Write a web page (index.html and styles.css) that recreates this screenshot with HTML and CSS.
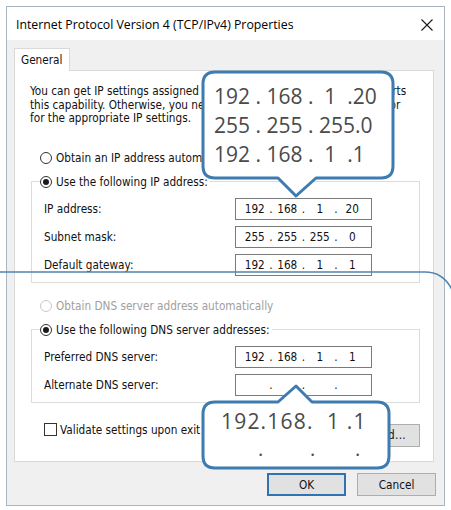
FILE: index.html
```html
<!DOCTYPE html>
<html>
<head>
<meta charset="utf-8">
<link rel="stylesheet" href="styles.css">
</head>
<body>
<div class="window">
  <div class="titlebar">
    <span class="title">Internet Protocol Version 4 (TCP/IPv4) Properties</span>
    <svg class="close" width="12" height="12" viewBox="0 0 12 12"><path d="M0.5 0.5 L11.5 11.5 M11.5 0.5 L0.5 11.5" stroke="#1a1a1a" stroke-width="1.1" fill="none"/></svg>
  </div>
  <div class="body">
    <div class="tabs"><div class="tab">General</div></div>
    <div class="panel">
      <p class="intro">You can get IP settings assigned automatically if your network supports<br>this capability. Otherwise, you need to ask your network administrator<br>for the appropriate IP settings.</p>
      <div class="radio-row first"><span class="radio"></span><span>Obtain an IP address automatically</span></div>
      <fieldset class="group">
        <legend class="radio-row"><span class="radio on"></span><span>Use the following IP address:</span></legend>
        <div class="field"><span class="label">IP address:</span><div class="ip"><span>192</span><i>.</i><span>168</span><i>.</i><span>1</span><i>.</i><span>20</span></div></div>
        <div class="field"><span class="label">Subnet mask:</span><div class="ip"><span>255</span><i>.</i><span>255</span><i>.</i><span>255</span><i>.</i><span>0</span></div></div>
        <div class="field"><span class="label">Default gateway:</span><div class="ip"><span>192</span><i>.</i><span>168</span><i>.</i><span>1</span><i>.</i><span>1</span></div></div>
      </fieldset>
      <div class="radio-row dns disabled"><span class="radio"></span><span>Obtain DNS server address automatically</span></div>
      <fieldset class="group">
        <legend class="radio-row"><span class="radio on"></span><span>Use the following DNS server addresses:</span></legend>
        <div class="field"><span class="label">Preferred DNS server:</span><div class="ip"><span>192</span><i>.</i><span>168</span><i>.</i><span>1</span><i>.</i><span>1</span></div></div>
        <div class="field"><span class="label">Alternate DNS server:</span><div class="ip"><span></span><i>.</i><span></span><i>.</i><span></span><i>.</i><span></span></div></div>
      </fieldset>
      <div class="check-row">
        <span class="checkbox"></span><span class="check-label">Validate settings upon exit</span>
        <button class="btn advanced">Advanced...</button>
      </div>
    </div>
    <div class="buttons">
      <button class="btn ok">OK</button>
      <button class="btn">Cancel</button>
    </div>
  </div>
</div>

<svg class="overlay" width="451" height="510" viewBox="0 0 451 510">
  <path d="M0 272 L425 272 C438 272 447 278 453 292" stroke="#4f84b2" stroke-width="1.6" fill="none"/>
  <path d="M215 72 L381 72 Q393 72 393 84 L393 166 Q393 178 381 178 L316 178 L296 196 L278 178 L215 178 Q203 178 203 166 L203 84 Q203 72 215 72 Z" fill="#fff" stroke="#3d7bb0" stroke-width="3" stroke-linejoin="round"/>
  <path d="M215 402 L278 402 L296 386 L312 402 L377 402 Q389 402 389 414 L389 456 Q389 468 377 468 L215 468 Q203 468 203 456 L203 414 Q203 402 215 402 Z" fill="#fff" stroke="#3d7bb0" stroke-width="3" stroke-linejoin="round"/>
</svg>

<div class="callout c1">
  <div class="big">192 . 168 .  1  .20</div>
  <div class="big">255 . 255 . 255.0</div>
  <div class="big">192 . 168 .  1  .1</div>
</div>
<div class="callout c2">
  <div class="mid">192.168.  1 .1</div>
  <div class="dots"><span>.</span><span>.</span><span>.</span></div>
</div>
</body>
</html>
```
FILE: styles.css
```css
html, body {
  margin: 0;
  padding: 0;
  background: #fff;
}
body {
  width: 451px;
  height: 510px;
  position: relative;
  overflow: hidden;
  font-family: "DejaVu Sans Condensed", "DejaVu Sans", sans-serif;
  font-size: 11.7px;
  color: #111;
}
.window {
  margin: 6px 0 0 6px;
  width: 439px;
  height: 500px;
  box-sizing: border-box;
  border: 1px solid #a9b5c3;
  background: #f0f0f0;
  display: flex;
  flex-direction: column;
}
.titlebar {
  height: 33px;
  background: #fff;
  display: flex;
  align-items: center;
  justify-content: space-between;
  padding: 0 11px 0 9px;
  flex: none;
}
.title {
  font-family: "Open Sans", "Noto Sans", sans-serif;
  font-size: 12.3px;
  color: #000;
  padding-top: 2px;
}
.close {
  margin-top: 2px;
}
.body {
  padding: 8px 0 0 7px;
  display: flex;
  flex-direction: column;
}
.tabs {
  display: flex;
  height: 22px;
}
.tab {
  width: 56px;
  height: 23px;
  box-sizing: border-box;
  border: 1px solid #d9d9d9;
  border-bottom: none;
  background: #fff;
  padding: 4px 0 0 6px;
  position: relative;
  z-index: 1;
}
.panel {
  width: 420px;
  height: 392px;
  box-sizing: border-box;
  border: 1px solid #d9d9d9;
  background: #fff;
  padding: 14px 13px 0 15px;
}
.intro {
  margin: 0;
  line-height: 13.5px;
  white-space: nowrap;
}
.radio-row {
  display: flex;
  align-items: center;
  height: 16px;
  white-space: nowrap;
}
.radio-row.first {
  margin: 24px 0 0 10px;
}
.radio {
  width: 12px;
  height: 12px;
  box-sizing: border-box;
  border: 1px solid #333;
  border-radius: 50%;
  background: #fff;
  margin-right: 4px;
  display: flex;
  align-items: center;
  justify-content: center;
  flex: none;
}
.radio.on::after {
  content: "";
  width: 6px;
  height: 6px;
  border-radius: 50%;
  background: #1a1a1a;
}
.disabled {
  color: #a0a0a0;
}
.disabled .radio {
  border-color: #c8c8c8;
}
.group {
  margin: 8px 0 0 1px;
  padding: 8px 47px 6px 12px;
  border: 1px solid #dcdcdc;
  display: flex;
  flex-direction: column;
  gap: 6px;
  min-width: 0;
}
.group legend {
  padding: 0 2px 0 0;
  margin-left: -4px;
}
.field {
  display: flex;
  align-items: center;
  justify-content: space-between;
  height: 22px;
}
.ip {
  width: 137px;
  height: 22px;
  box-sizing: border-box;
  border: 1px solid #7a7a7a;
  padding: 0 6px;
  display: grid;
  grid-template-columns: 1fr 7px 1fr 7px 1fr 7px 1fr;
  align-items: center;
  text-align: center;
}
.ip i {
  font-style: normal;
}
.dns {
  margin: 15px 0 0 10px;
}
.check-row {
  margin: 21px 0 0 14px;
  display: flex;
  align-items: flex-start;
  height: 23px;
}
.checkbox {
  width: 13px;
  height: 13px;
  box-sizing: border-box;
  border: 1px solid #333;
  background: #fff;
  margin-top: -1px;
  flex: none;
}
.check-label {
  margin-left: 3px;
  line-height: 13px;
}
.btn {
  font-family: "DejaVu Sans Condensed", "DejaVu Sans", sans-serif;
  font-size: 11.7px;
  background: #e1e1e1;
  border: 1px solid #adadad;
  height: 23px;
  padding: 0;
  color: #111;
}
.advanced {
  margin-left: auto;
  width: 90px;
  text-align: right;
  padding-right: 13px;
  letter-spacing: 0.3px;
}
.buttons {
  display: flex;
  justify-content: flex-end;
  gap: 11px;
  margin: 11px 8px 0 0;
}
.buttons .btn {
  width: 79px;
}
.btn.ok {
  border: 2px solid #2f73b3;
}
.overlay {
  position: absolute;
  left: 0;
  top: 0;
  pointer-events: none;
}
.callout {
  position: absolute;
  font-family: "Open Sans", "Noto Sans", sans-serif;
  color: #4a4a4a;
}
.c1 {
  left: 214px;
  top: 82px;
}
.big {
  font-size: 21px;
  line-height: 29px;
  white-space: pre;
}
.c2 {
  left: 221px;
  top: 407px;
}
.mid {
  font-size: 21px;
  line-height: 28px;
  letter-spacing: 1.2px;
  white-space: pre;
}
.dots {
  position: relative;
  height: 28px;
  font-size: 20px;
  line-height: 28px;
}
.dots span {
  position: absolute;
  top: 0;
}
.dots span:nth-child(1) { left: 37px; }
.dots span:nth-child(2) { left: 89px; }
.dots span:nth-child(3) { left: 134px; }
```
